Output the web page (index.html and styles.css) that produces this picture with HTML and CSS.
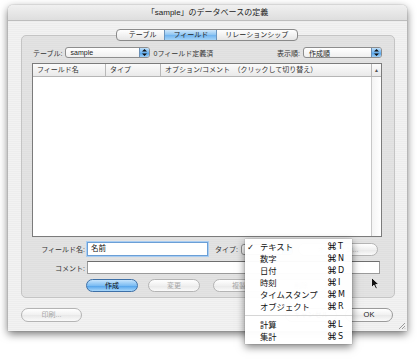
FILE: index.html
```html
<!DOCTYPE html>
<html lang="ja">
<head>
    <meta charset="UTF-8">
    <title>データベースの定義</title>
    <link rel="stylesheet" href="styles.css">
</head>
<body>

<div class="screen">
    <div class="window">
        <div class="titlebar">「sample」のデータベースの定義</div>
        <div class="content">
            <div class="groupbox">
                <div class="tabs">
                    <span class="tab">テーブル</span>
                    <span class="tab selected">フィールド</span>
                    <span class="tab">リレーションシップ</span>
                </div>

                <div class="table-row">
                    <span class="label">テーブル:</span>
                    <div class="popup table-popup">
                        <span class="popup-text">sample</span>
                        <span class="popup-arrows">
                            <svg width="5" height="7" viewBox="0 0 5 7"><path d="M2.5 0 L5 2.5 L0 2.5 Z M2.5 7 L5 4.5 L0 4.5 Z" fill="#111"/></svg>
                        </span>
                    </div>
                    <span class="count">0フィールド定義済</span>
                    <span class="label sort-label">表示順:</span>
                    <div class="popup sort-popup">
                        <span class="popup-text">作成順</span>
                        <span class="popup-arrows">
                            <svg width="5" height="7" viewBox="0 0 5 7"><path d="M2.5 0 L5 2.5 L0 2.5 Z M2.5 7 L5 4.5 L0 4.5 Z" fill="#111"/></svg>
                        </span>
                    </div>
                </div>

                <div class="field-list">
                    <div class="list-header">
                        <span class="col col-name">フィールド名</span>
                        <span class="col col-type">タイプ</span>
                        <span class="col col-opt">オプション/コメント　（クリックして切り替え）</span>
                        <span class="col col-scroll">▲</span>
                    </div>
                    <div class="list-body">
                        <div class="list-rows"></div>
                        <div class="scroll-track"></div>
                    </div>
                </div>

                <div class="form-row">
                    <span class="form-label">フィールド名:</span>
                    <div class="text-input name-input focused">名前</div>
                    <span class="type-label">タイプ:</span>
                    <div class="popup type-popup">
                        <span class="popup-text"></span>
                        <span class="popup-arrows"></span>
                    </div>
                    <span class="button option-button disabled">オプション...</span>
                </div>

                <div class="form-row comment-row">
                    <span class="form-label">コメント:</span>
                    <div class="text-input comment-input"></div>
                </div>

                <div class="button-row">
                    <span class="button default">作成</span>
                    <span class="button disabled">変更</span>
                    <span class="button disabled dup">複製</span>
                    <span class="button disabled">削除</span>
                </div>
            </div>

            <div class="footer">
                <span class="button disabled print-button">印刷...</span>
                <div class="footer-right">
                    <span class="button cancel-button">キャンセル</span>
                    <span class="button ok-button">OK</span>
                </div>
            </div>
        </div>
        <svg class="grip" width="8" height="8" viewBox="0 0 8 8">
            <path d="M7 1 L1 7 M7 4 L4 7 M7 6.5 L6.5 7" stroke="#9a9a9a" stroke-width="1"/>
        </svg>
    </div>

    <div class="type-menu">
        <div class="menu-item"><span class="check">✓</span><span class="menu-text">テキスト</span><span class="shortcut"><span class="cmd">⌘</span>T</span></div>
        <div class="menu-item"><span class="check"></span><span class="menu-text">数字</span><span class="shortcut"><span class="cmd">⌘</span>N</span></div>
        <div class="menu-item"><span class="check"></span><span class="menu-text">日付</span><span class="shortcut"><span class="cmd">⌘</span>D</span></div>
        <div class="menu-item"><span class="check"></span><span class="menu-text">時刻</span><span class="shortcut"><span class="cmd">⌘</span>I</span></div>
        <div class="menu-item"><span class="check"></span><span class="menu-text">タイムスタンプ</span><span class="shortcut"><span class="cmd">⌘</span>M</span></div>
        <div class="menu-item"><span class="check"></span><span class="menu-text">オブジェクト</span><span class="shortcut"><span class="cmd">⌘</span>R</span></div>
        <div class="menu-separator"></div>
        <div class="menu-item"><span class="check"></span><span class="menu-text">計算</span><span class="shortcut"><span class="cmd">⌘</span>L</span></div>
        <div class="menu-item"><span class="check"></span><span class="menu-text">集計</span><span class="shortcut"><span class="cmd">⌘</span>S</span></div>
    </div>

    <svg class="cursor" width="9" height="13" viewBox="0 0 9 13">
        <path d="M0.5 0.5 L0.5 10.5 L3 8.2 L4.8 12 L6.4 11.3 L4.7 7.6 L8 7.6 Z" fill="#111" stroke="#fff" stroke-width="0.8"/>
    </svg>
</div>

</body>
</html>
```

FILE: styles.css
```css
body {
    margin: 0;
    background-color: #fff;
    font-family: "Liberation Sans", "Noto Sans CJK JP", sans-serif;
    font-size: 7px;
    color: #2a2a2a;
}
.screen {
    position: relative;
    width: 420px;
    height: 360px;
    overflow: hidden;
}
.window {
    position: relative;
    margin: 5px 0 0 8px;
    width: 399px;
    height: 326px;
    border-radius: 5px 5px 0 0;
    background: repeating-linear-gradient(#ededed 0 1px, #f2f2f2 1px 2px);
    box-shadow: 0 3px 9px rgba(0, 0, 0, 0.55), 0 0 1px rgba(0, 0, 0, 0.5);
    display: flex;
    flex-direction: column;
}
.titlebar {
    height: 15px;
    line-height: 15px;
    text-align: center;
    font-size: 8px;
    color: #222;
    border-radius: 5px 5px 0 0;
    background: linear-gradient(#f0f0f0, #dedede);
    border-bottom: 1px solid #bdbdbd;
}
.content {
    padding: 14px 14px 9px 13px;
    display: flex;
    flex-direction: column;
}
.groupbox {
    box-sizing: border-box;
    width: 374px;
    height: 263px;
    padding: 0 12px 0 10px;
    border: 1px solid #c4c4c4;
    border-radius: 5px;
    background-color: rgba(0, 0, 0, 0.06);
    display: flex;
    flex-direction: column;
}
.tabs {
    box-sizing: border-box;
    margin: -7px auto 0;
    height: 12px;
    display: flex;
    border: 1px solid #8a8a8a;
    border-radius: 4px;
    background: linear-gradient(#ffffff, #e6e6e6);
    overflow: hidden;
}
.tab {
    padding: 0 8px;
    line-height: 10px;
    font-size: 7px;
    color: #222;
    border-left: 1px solid #a8a8a8;
}
.tab:first-child {
    border-left: none;
    padding-left: 12px;
}
.tab:last-child {
    padding-right: 9px;
}
.tab.selected {
    background: linear-gradient(#cfe7fb, #8cc4f2 50%, #6fb3ef 51%, #a5d3f7);
    border-left-color: #6b95bd;
}
.tab.selected + .tab {
    border-left-color: #6b95bd;
}
.table-row {
    margin-top: 6px;
    height: 11px;
    display: flex;
    align-items: center;
}
.label {
    margin-left: 1px;
    color: #333;
}
.popup {
    box-sizing: border-box;
    height: 11px;
    display: flex;
    align-items: center;
    border: 1px solid #8d8d8d;
    border-radius: 3px;
    background: linear-gradient(#ffffff, #efefef);
    overflow: hidden;
}
.popup-text {
    flex: 1;
    padding-left: 5px;
    color: #222;
}
.popup-arrows {
    width: 9px;
    height: 100%;
    display: flex;
    align-items: center;
    justify-content: center;
    background: linear-gradient(#bfe0fb, #70b4ef 50%, #4b9ee8 51%, #9fd0f7);
    border-left: 1px solid #6a8fb5;
}
.table-popup {
    margin-left: 2px;
    width: 85px;
}
.count {
    margin-left: 4px;
    color: #333;
}
.sort-label {
    margin-left: auto;
}
.sort-popup {
    margin-left: 3px;
    width: 79px;
}
.field-list {
    box-sizing: border-box;
    margin-top: 5px;
    height: 174px;
    border: 1px solid #7b7b7b;
    background-color: #fff;
    display: flex;
    flex-direction: column;
}
.list-header {
    height: 12px;
    display: flex;
    background: linear-gradient(#fbfbfb, #e9e9e9);
    border-bottom: 1px solid #b5b5b5;
}
.col {
    line-height: 12px;
    padding-left: 4px;
    color: #333;
    border-right: 1px solid #b8b8b8;
}
.col-name {
    width: 68px;
}
.col-type {
    width: 50px;
}
.col-opt {
    flex: 1;
}
.col-scroll {
    width: 9px;
    padding: 0;
    border-right: none;
    text-align: center;
    font-size: 5px;
    color: #555;
}
.list-body {
    flex: 1;
    display: flex;
}
.list-rows {
    flex: 1;
}
.scroll-track {
    width: 9px;
    border-left: 1px solid #c8c8c8;
    background: linear-gradient(to right, #f4f4f4, #ffffff);
}
.form-row {
    margin-top: 5px;
    height: 14px;
    display: flex;
    align-items: center;
}
.comment-row {
    height: 13px;
}
.form-label {
    width: 53px;
    text-align: right;
    color: #333;
}
.text-input {
    box-sizing: border-box;
    height: 100%;
    margin-left: 2px;
    padding-left: 3px;
    line-height: 12px;
    background-color: #fff;
    border: 1px solid #9a9a9a;
    border-top-color: #6e6e6e;
    color: #111;
    font-size: 7.5px;
}
.name-input {
    width: 121px;
}
.text-input.focused {
    border-color: #6b9fd6;
    box-shadow: 0 0 0 1px #a9cdf2;
}
.comment-input {
    width: 293px;
}
.type-label {
    margin-left: 7px;
    color: #333;
}
.type-popup {
    margin-left: 3px;
    width: 52px;
}
.button {
    box-sizing: border-box;
    height: 13px;
    line-height: 11px;
    text-align: center;
    border: 1px solid #9a9a9a;
    border-radius: 7px;
    background: linear-gradient(#ffffff, #f0f0f0 50%, #e8e8e8 51%, #fafafa);
    color: #222;
}
.button.disabled {
    color: #a6a6a6;
    border-color: #b4b4b4;
}
.option-button {
    margin-left: 5px;
    width: 80px;
}
.button-row {
    margin-top: 5px;
    margin-left: 54px;
    display: flex;
    gap: 10px;
}
.button-row .button {
    width: 52px;
}
.button-row .dup {
    margin-left: 3px;
}
.button.default {
    border-color: #3d6fa6;
    background: linear-gradient(#c6e4fc, #7dbdf3 50%, #4c9fea 51%, #a8d7fa);
    color: #111;
}
.footer {
    margin-top: 10px;
    height: 14px;
    display: flex;
    justify-content: space-between;
}
.footer .button {
    height: 14px;
    line-height: 12px;
}
.print-button {
    width: 61px;
}
.footer-right {
    display: flex;
    gap: 8px;
}
.cancel-button {
    width: 52px;
}
.ok-button {
    width: 48px;
    font-size: 7.5px;
}
.grip {
    position: absolute;
    right: 1px;
    bottom: 1px;
}
.type-menu {
    position: absolute;
    left: 245px;
    top: 239px;
    width: 107px;
    padding: 2px 0 1px;
    background-color: rgba(255, 255, 255, 0.97);
    box-shadow: 0 3px 8px rgba(0, 0, 0, 0.5), 0 0 1px rgba(0, 0, 0, 0.4);
    font-size: 8.3px;
    color: #111;
}
.menu-item {
    height: 12px;
    line-height: 12px;
    display: flex;
}
.check {
    width: 13px;
    padding-left: 2px;
    font-family: "DejaVu Sans", sans-serif;
    font-size: 8.5px;
    font-weight: bold;
}
.menu-text {
    flex: 1;
}
.shortcut {
    width: 25px;
    font-family: "DejaVu Sans", sans-serif;
    font-size: 8px;
}
.shortcut .cmd {
    font-size: 10px;
    vertical-align: -1px;
    margin-right: 1px;
}
.menu-separator {
    height: 6px;
    background: linear-gradient(transparent 2px, #d6d6d6 2px 3px, transparent 3px);
}
.cursor {
    position: absolute;
    left: 371px;
    top: 277px;
}
```
